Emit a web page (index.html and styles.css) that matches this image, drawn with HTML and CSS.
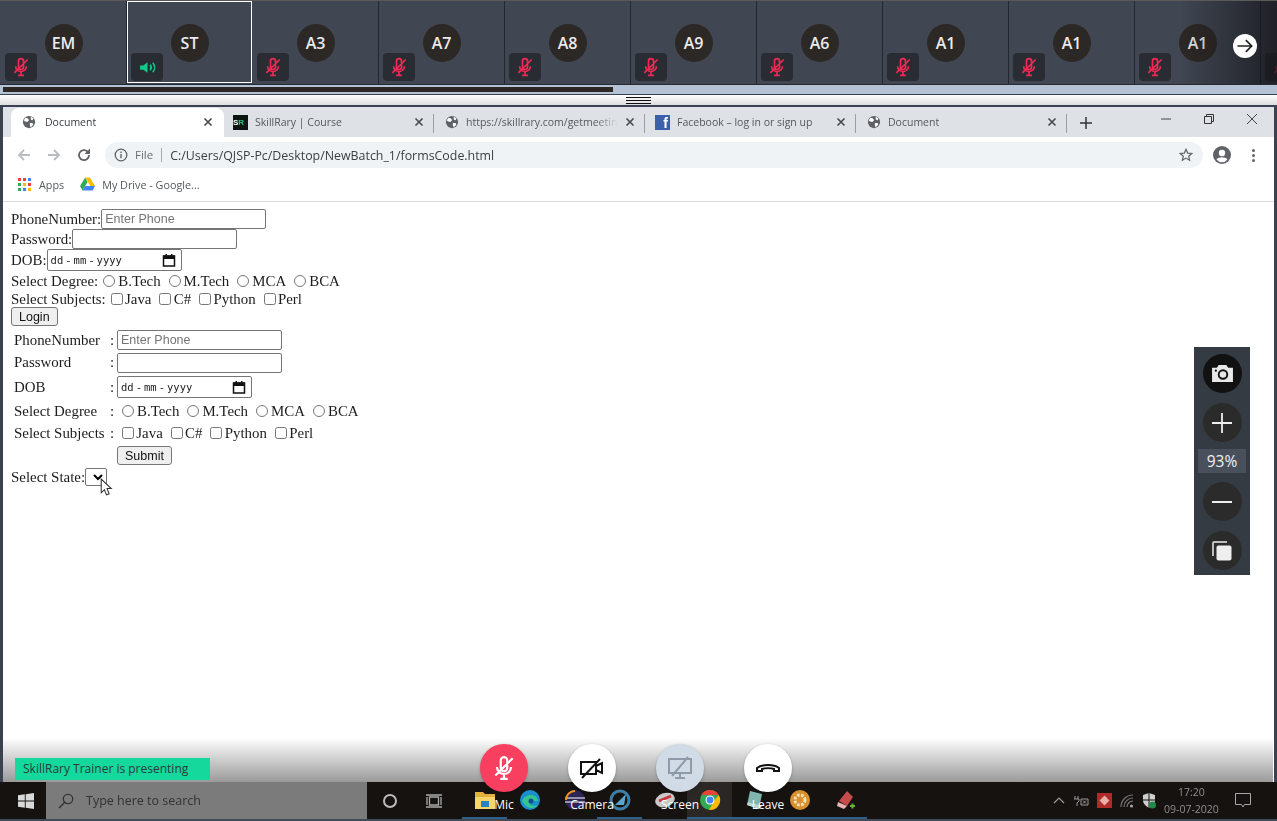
FILE: index.html
```html
<!DOCTYPE html>
<html>
<head>
    <title>Meeting</title>
    <link rel="stylesheet" href="styles.css">
</head>
<body>
    <svg class="defs" width="0" height="0">
        <symbol id="mic-off" viewBox="0 0 24 24">
            <path d="M9 5a3 3 0 0 1 6 0v7a3 3 0 0 1-6 0z M5.5 11a6.5 6.5 0 0 0 13 0 M12 18v4 M8.5 22h7 M4 19 20 3" fill="none" stroke="currentColor" stroke-width="2"/>
        </symbol>
        <symbol id="globe" viewBox="0 0 16 16">
            <circle cx="8" cy="8" r="7" fill="#5f6368"/>
            <path d="M4 3l3 1 1 2-2 2-3-1-1-1z M9 9l3 0 1 2-3 3-1-2z M10 2l3 2-1 2-2-1z" fill="#fff"/>
        </symbol>
        <symbol id="close-x" viewBox="0 0 10 10">
            <path d="M1.5 1.5l7 7M8.5 1.5l-7 7" stroke="#45484c" stroke-width="1.6" fill="none"/>
        </symbol>
        <symbol id="calendar" viewBox="0 0 14 14">
            <path d="M1.5 3h11v10h-11z" fill="none" stroke="#111" stroke-width="1.5"/>
            <path d="M1 2.5h12V6H1z M3.5 1h1.5v2H3.5z M9 1h1.5v2H9z" fill="#111"/>
        </symbol>
    </svg>

    <div class="strip">
        <div class="tile"><span class="avatar">EM</span><span class="badge"><svg class="mic"><use href="#mic-off"/></svg></span></div>
        <div class="tile tile-active">
            <span class="avatar">ST</span>
            <span class="badge">
                <svg class="speaker" viewBox="0 0 16 16"><path d="M1 6h3l4-3v10l-4-3H1z" fill="#12c98a"/><path d="M10.500 5.500a4 4 0 0 1 0 5M13 3.500a7 7 0 0 1 0 9" fill="none" stroke="#12c98a" stroke-width="1.500"/></svg>
            </span>
        </div>
        <div class="tile"><span class="avatar">A3</span><span class="badge"><svg class="mic"><use href="#mic-off"/></svg></span></div>
        <div class="tile"><span class="avatar">A7</span><span class="badge"><svg class="mic"><use href="#mic-off"/></svg></span></div>
        <div class="tile"><span class="avatar">A8</span><span class="badge"><svg class="mic"><use href="#mic-off"/></svg></span></div>
        <div class="tile"><span class="avatar">A9</span><span class="badge"><svg class="mic"><use href="#mic-off"/></svg></span></div>
        <div class="tile"><span class="avatar">A6</span><span class="badge"><svg class="mic"><use href="#mic-off"/></svg></span></div>
        <div class="tile"><span class="avatar">A1</span><span class="badge"><svg class="mic"><use href="#mic-off"/></svg></span></div>
        <div class="tile"><span class="avatar">A1</span><span class="badge"><svg class="mic"><use href="#mic-off"/></svg></span></div>
        <div class="tile"><span class="avatar">A1</span><span class="badge"><svg class="mic"><use href="#mic-off"/></svg></span></div>
        <div class="tile"><span class="badge"><svg class="mic"><use href="#mic-off"/></svg></span></div>
        <div class="strip-shade"></div>
        <div class="strip-next">
            <svg viewBox="0 0 24 24" width="20" height="20"><path d="M3 12h17M13 5l7 7-7 7" fill="none" stroke="#222" stroke-width="2"/></svg>
        </div>
    </div>
    <div class="scrubber"><div class="scrubber-thumb"></div></div>
    <div class="splitter"><div class="splitter-grip"></div></div>

    <div class="browser">
        <div class="tabbar">
            <div class="tab tab-active">
                <svg class="tab-icon"><use href="#globe"/></svg>
                <span class="tab-title">Document</span>
                <svg class="tab-close"><use href="#close-x"/></svg>
            </div>
            <div class="tab">
                <span class="sr-icon">S<b>R</b></span>
                <span class="tab-title">SkillRary | Course</span>
                <svg class="tab-close"><use href="#close-x"/></svg>
            </div>
            <div class="tab tab-sep">
                <svg class="tab-icon"><use href="#globe"/></svg>
                <span class="tab-title tab-fade">https://skillrary.com/getmeetin</span>
                <svg class="tab-close"><use href="#close-x"/></svg>
            </div>
            <div class="tab tab-sep">
                <span class="fb-icon">f</span>
                <span class="tab-title">Facebook – log in or sign up</span>
                <svg class="tab-close"><use href="#close-x"/></svg>
            </div>
            <div class="tab tab-sep">
                <svg class="tab-icon"><use href="#globe"/></svg>
                <span class="tab-title">Document</span>
                <svg class="tab-close"><use href="#close-x"/></svg>
            </div>
            <div class="tab-plus tab-sep">
                <svg viewBox="0 0 12 12" width="12" height="12"><path d="M6 0v12M0 6h12" stroke="#333" stroke-width="1.500"/></svg>
            </div>
            <div class="win-controls">
                <svg viewBox="0 0 10 10" width="10" height="10"><path d="M0 5h10" stroke="#444"/></svg>
                <svg viewBox="0 0 10 10" width="10" height="10"><path d="M.5 2.500h7v7h-7z M2.500 2.500v-2h7v7h-2" fill="none" stroke="#333"/></svg>
                <svg viewBox="0 0 10 10" width="10" height="10"><path d="M0 0l10 10M10 0L0 10" stroke="#444"/></svg>
            </div>
        </div>

        <div class="toolbar">
            <svg class="nav-icon" viewBox="0 0 16 16"><path d="M14 8H3M8 3L3 8l5 5" fill="none" stroke="#b9bcc0" stroke-width="1.800"/></svg>
            <svg class="nav-icon" viewBox="0 0 16 16"><path d="M2 8h11M8 3l5 5-5 5" fill="none" stroke="#b9bcc0" stroke-width="1.800"/></svg>
            <svg class="nav-icon" viewBox="0 0 16 16"><path d="M13 8a5 5 0 1 1-1.500-3.500L13 6" fill="none" stroke="#5f6368" stroke-width="1.800"/><path d="M14 1.500V7H8.500z" fill="#5f6368"/></svg>
            <div class="omnibox">
                <svg class="info-icon" viewBox="0 0 14 14"><circle cx="7" cy="7" r="5.800" fill="none" stroke="#5f6368" stroke-width="1.300"/><path d="M7 6v4.300M7 3.600v1.400" stroke="#5f6368" stroke-width="1.400"/></svg>
                <span class="omni-file">File</span>
                <span class="omni-url">C:/Users/QJSP-Pc/Desktop/NewBatch_1/formsCode.html</span>
                <svg class="star-icon" viewBox="0 0 14 14"><path d="M7 1.300l1.700 3.800 4.100.4-3.100 2.700.9 4L7 10.100l-3.600 2.100.9-4L1.200 5.500l4.100-.4z" fill="none" stroke="#5f6368" stroke-width="1.200"/></svg>
            </div>
            <svg class="account-icon" viewBox="0 0 18 18"><circle cx="9" cy="9" r="9" fill="#5f6368"/><circle cx="9" cy="7" r="3.200" fill="#fff"/><path d="M3.500 13.500c2-3 9-3 11 0a7 7 0 0 1-11 0z" fill="#fff"/></svg>
            <div class="menu-dots"><i></i><i></i><i></i></div>
        </div>

        <div class="bookmarks">
            <svg class="apps-icon" viewBox="0 0 13 13">
                <path d="M0 0h3v3H0z" fill="#ea4335"/><path d="M5 0h3v3H5z" fill="#ea4335"/><path d="M10 0h3v3h-3z" fill="#4285f4"/>
                <path d="M0 5h3v3H0z" fill="#34a853"/><path d="M5 5h3v3H5z" fill="#fbbc05"/><path d="M10 5h3v3h-3z" fill="#ea4335"/>
                <path d="M0 10h3v3H0z" fill="#34a853"/><path d="M5 10h3v3H5z" fill="#4285f4"/><path d="M10 10h3v3h-3z" fill="#fbbc05"/>
            </svg>
            <span class="bm-apps">Apps</span>
            <svg class="drive-icon" viewBox="0 0 16 14">
                <path d="M5.500 0h5L16 9h-5z" fill="#fbbc05"/><path d="M5.500 0L0 9l2.500 5L8 5z" fill="#34a853"/><path d="M5.500 9H16l-2.500 5h-11z" fill="#4285f4"/>
            </svg>
            <span>My Drive - Google...</span>
        </div>

        <div class="page">
            <div class="plain-form">
                <div class="line line-input">PhoneNumber:<input class="text-box" type="text" placeholder="Enter Phone"></div>
                <div class="line line-input">Password:<input class="text-box" type="password"></div>
                <div class="line line-date">DOB:<div class="date-box"><span>dd - mm - yyyy</span><svg class="cal"><use href="#calendar"/></svg></div></div>
                <div class="line line-degree">Select Degree:
                    <label class="opt opt-first"><input type="radio" name="d1">B.Tech</label>
                    <label class="opt"><input type="radio" name="d1">M.Tech</label>
                    <label class="opt"><input type="radio" name="d1">MCA</label>
                    <label class="opt"><input type="radio" name="d1">BCA</label>
                </div>
                <div class="line line-subjects">Select Subjects:
                    <label class="opt opt-first"><input type="checkbox">Java</label>
                    <label class="opt"><input type="checkbox">C#</label>
                    <label class="opt"><input type="checkbox">Python</label>
                    <label class="opt"><input type="checkbox">Perl</label>
                </div>
                <button class="btn">Login</button>
            </div>

            <div class="table-form">
                <div class="cell row-a">PhoneNumber</div><div class="cell row-a">:</div><div class="cell row-a"><input class="text-box" type="text" placeholder="Enter Phone"></div>
                <div class="cell row-b">Password</div><div class="cell row-b">:</div><div class="cell row-b"><input class="text-box" type="password"></div>
                <div class="cell row-c">DOB</div><div class="cell row-c">:</div><div class="cell row-c"><div class="date-box date-box-table"><span>dd - mm - yyyy</span><svg class="cal"><use href="#calendar"/></svg></div></div>
                <div class="cell row-d">Select Degree</div><div class="cell row-d">:</div>
                <div class="cell row-d opts">
                    <label class="opt"><input type="radio" name="d2">B.Tech</label>
                    <label class="opt"><input type="radio" name="d2">M.Tech</label>
                    <label class="opt"><input type="radio" name="d2">MCA</label>
                    <label class="opt"><input type="radio" name="d2">BCA</label>
                </div>
                <div class="cell row-e">Select Subjects</div><div class="cell row-e">:</div>
                <div class="cell row-e opts">
                    <label class="opt"><input type="checkbox">Java</label>
                    <label class="opt"><input type="checkbox">C#</label>
                    <label class="opt"><input type="checkbox">Python</label>
                    <label class="opt"><input type="checkbox">Perl</label>
                </div>
                <div class="cell row-f"></div><div class="cell row-f"></div><div class="cell row-f"><button class="btn">Submit</button></div>
            </div>

            <div class="line line-state">Select State:<select class="state-select"></select></div>
            <svg class="cursor" viewBox="0 0 12 18" width="13" height="19"><path d="M1 1v13l3-3 2 5 2.500-1-2-5h4z" fill="#fff" stroke="#333"/></svg>
        </div>
    </div>

    <div class="taskbar">
        <svg class="win-logo" viewBox="0 0 16 16"><path d="M0 2.300l6.800-1v6.300H0z M7.700 1.200L16 0v7.600H7.700z M0 8.400h6.800v6.300l-6.800-1z M7.700 8.400H16V16l-8.300-1.200z" fill="#d8d8d8"/></svg>
        <div class="task-search">
            <svg viewBox="0 0 16 16" width="16" height="16"><circle cx="10" cy="6" r="4.700" fill="none" stroke="#333" stroke-width="1.300"/><path d="M6.500 9.500L1 15" stroke="#333" stroke-width="1.500"/></svg>
            <span>Type here to search</span>
        </div>
        <div class="task-cortana"></div>
        <svg class="task-view" viewBox="0 0 16 14" width="16" height="14"><path d="M3.500 3h9v8h-9z M0 1h16M0 13h16M1 3v8M15 3v8" fill="none" stroke="#aaa" stroke-width="1.300"/></svg>
        <div class="task-apps">
            <div class="app">
                <svg viewBox="0 0 22 22" width="22" height="22"><path d="M1 3h8l2 2h10v15H1z" fill="#e3b23c"/><path d="M1 8h20v12H1z" fill="#f5d46a"/><path d="M7 12h8v6H7z" fill="#2a7fc4"/></svg>
            </div>
            <div class="app app-plain">
                <svg viewBox="0 0 22 22" width="22" height="22"><circle cx="11" cy="11" r="10" fill="#1a8fd0"/><path d="M3 12c3-8 15-8 16 0h-9c-1 3 3 6 9 4-4 5-12 4-16-4z" fill="#35c48d"/><circle cx="12" cy="12" r="2.500" fill="#0d4f8a"/></svg>
            </div>
            <div class="app app-plain">
                <svg viewBox="0 0 22 22" width="22" height="22"><circle cx="11" cy="11" r="10" fill="#2b2455"/><path d="M1 9h20M1 13h20" stroke="#fff" stroke-width="1.200"/><path d="M2 11a9 9 0 0 1 9-9" fill="none" stroke="#f7941e" stroke-width="2"/></svg>
            </div>
            <div class="app">
                <svg viewBox="0 0 22 22" width="22" height="22"><circle cx="11" cy="11" r="9" fill="none" stroke="#3d7ea6" stroke-width="3"/><path d="M6 16L17 5l-2 11z" fill="#5aa5cc"/></svg>
            </div>
            <div class="app app-plain">
                <svg viewBox="0 0 22 22" width="22" height="22"><ellipse cx="11" cy="11" rx="10" ry="7" fill="#c9c9c9" transform="rotate(-18 11 11)"/><path d="M5 12l12-5" stroke="#c8323a" stroke-width="2.500"/></svg>
            </div>
            <div class="app app-chrome">
                <svg viewBox="0 0 22 22" width="22" height="22"><circle cx="11" cy="11" r="10" fill="#34a853"/><path d="M2.300 6a10 10 0 0 1 17.400 0H11z" fill="#ea4335"/><path d="M19.700 6A10 10 0 0 1 10 21l5-9z" fill="#fbbc05"/><circle cx="11" cy="11" r="4.500" fill="#fff"/><circle cx="11" cy="11" r="3.400" fill="#4285f4"/></svg>
            </div>
            <div class="app">
                <svg viewBox="0 0 22 22" width="22" height="22"><path d="M6 2l12 3-3 15-12-4z" fill="#7fb5ad"/><path d="M3 16l12 4 3-3-14-4z" fill="#bcd6d2"/></svg>
            </div>
            <div class="app">
                <svg viewBox="0 0 22 22" width="22" height="22"><circle cx="11" cy="11" r="10" fill="#d8912c"/><circle cx="11" cy="11" r="5" fill="none" stroke="#f6e3bd" stroke-width="3" stroke-dasharray="2.500 1.500"/></svg>
            </div>
            <div class="app">
                <svg viewBox="0 0 22 22" width="22" height="22"><path d="M5 12L13 2l6 6-6 9z" fill="#c64b4b"/><path d="M4 13l9 4-3 3-7-3z" fill="#e8b4b4"/><path d="M16 17h5M18.500 14.500v5" stroke="#66b032" stroke-width="2"/></svg>
            </div>
        </div>
        <div class="tray">
            <svg viewBox="0 0 12 7" width="12" height="7"><path d="M1 6l5-5 5 5" fill="none" stroke="#9a9a9a" stroke-width="1.200"/></svg>
            <svg viewBox="0 0 16 12" width="16" height="12"><path d="M2 1v3M5 1v3M1 4h5v2L4 8v3M8 4h7v6H8zM10 5.500l3 3M13 5.500l-3 3" fill="none" stroke="#9a9a9a"/></svg>
            <span class="tray-red"><i></i></span>
            <svg viewBox="0 0 14 14" width="14" height="14"><path d="M1 13a12 12 0 0 1 12-12M4 13a9 9 0 0 1 9-9M7 13a6 6 0 0 1 6-6" fill="none" stroke="#777" stroke-width="1.200"/><circle cx="11.500" cy="12" r="1.500" fill="#aaa"/></svg>
            <svg viewBox="0 0 14 16" width="14" height="16"><path d="M7 0l6 2v5c0 4-3 6-6 8-3-2-6-4-6-8V2z" fill="#cfcfcf"/><path d="M7 0v15M1 7h12" stroke="#161210"/><circle cx="10.500" cy="12" r="3.500" fill="#1f8a4c"/></svg>
            <div class="clock"><span>17:20</span><span>09-07-2020</span></div>
            <svg class="notify" viewBox="0 0 16 15" width="16" height="15"><path d="M.5.500h15v11H9.500L8 14 6.500 11.500h-6z" fill="none" stroke="#a8a8a8"/></svg>
        </div>
    </div>

    <div class="zoom-panel">
        <div class="zoom-btn zoom-btn-shot">
            <svg viewBox="0 0 24 20" width="23" height="19"><path d="M1 4h5l2-3h8l2 3h5v15H1z" fill="#e8e8e8"/><circle cx="12.500" cy="11" r="4.500" fill="#e8e8e8" stroke="#111" stroke-width="2"/><circle cx="5" cy="7" r="1.200" fill="#111"/></svg>
        </div>
        <div class="zoom-btn"><svg viewBox="0 0 20 20" width="20" height="20"><path d="M10 0v20M0 10h20" stroke="#eee" stroke-width="1.800"/></svg></div>
        <div class="zoom-value">93%</div>
        <div class="zoom-btn"><svg viewBox="0 0 20 4" width="20" height="4"><path d="M0 2h20" stroke="#eee" stroke-width="2"/></svg></div>
        <div class="zoom-btn"><svg viewBox="0 0 20 20" width="20" height="20"><path d="M1 15V2a1 1 0 0 1 1-1h13" fill="none" stroke="#eee" stroke-width="1.500"/><rect x="4.500" y="4.500" width="15" height="15" rx="2" fill="#eee"/></svg></div>
    </div>

    <div class="call-bar">
        <div class="presenting">SkillRary Trainer is presenting</div>
        <div class="call-controls">
            <div class="call-item">
                <div class="call-btn call-btn-mic"><svg width="26" height="26"><use href="#mic-off"/></svg></div>
                <span>Mic</span>
            </div>
            <div class="call-item">
                <div class="call-btn">
                    <svg viewBox="0 0 26 26" width="26" height="26"><path d="M2 7h15v12H2z M17 11l6-3v10l-6-3" fill="none" stroke="#111" stroke-width="2"/><path d="M3 23L21 4" stroke="#111" stroke-width="2"/></svg>
                </div>
                <span>Camera</span>
            </div>
            <div class="call-item">
                <div class="call-btn call-btn-screen">
                    <svg viewBox="0 0 26 26" width="26" height="26"><path d="M2 4h22v14H2z M13 18v4 M8 23h10 M5 21L21 2" fill="none" stroke="#8e9aa8" stroke-width="2"/></svg>
                </div>
                <span>Screen</span>
            </div>
            <div class="call-item">
                <div class="call-btn">
                    <svg viewBox="0 0 26 12" width="26" height="12"><path d="M2 9V6c5-4 17-4 22 0v3h-5V7c-3-1-9-1-12 0v2z" fill="none" stroke="#111" stroke-width="2"/></svg>
                </div>
                <span>Leave</span>
            </div>
        </div>
    </div>
</body>
</html>
```

FILE: styles.css
```css
* {
  box-sizing: border-box;
}

body {
  margin: 0;
  width: 1277px;
  height: 821px;
  overflow: hidden;
  position: relative;
  display: flex;
  flex-direction: column;
  background-color: #fff;
  font-family: "Liberation Serif", serif;
}

.defs {
  position: absolute;
}

/* participant strip */
.strip {
  height: 85px;
  flex: none;
  position: relative;
  display: flex;
  overflow: hidden;
  padding-left: 1px;
  background-color: #404652;
  border-top: 1px solid #5a5a5a;
  border-bottom: 1px solid #252a33;
}

.tile {
  width: 126px;
  flex: none;
  position: relative;
  display: flex;
  justify-content: center;
  padding-top: 23px;
  border-right: 1px solid #23272e;
}

.tile-active {
  width: 125px;
  margin-right: 1px;
  border: 1px solid #fff;
  height: 82px;
  padding-top: 22px;
}

.avatar {
  width: 38px;
  height: 38px;
  border-radius: 50%;
  background-color: #2c2826;
  color: #ebebeb;
  font: 600 16px "Open Sans", sans-serif;
  display: flex;
  align-items: center;
  justify-content: center;
}

.badge {
  position: absolute;
  left: 4px;
  top: 52px;
  width: 32px;
  height: 28px;
  border-radius: 4px;
  background-color: #2a2c33;
  display: flex;
  align-items: center;
  justify-content: center;
  color: #ee2a55;
}

.tile-active .badge {
  left: 3px;
  top: 51px;
}

.mic {
  width: 20px;
  height: 20px;
}

.speaker {
  width: 17px;
  height: 17px;
}

.strip-shade {
  position: absolute;
  left: 1180px;
  top: 0;
  bottom: 0;
  width: 97px;
  background: linear-gradient(to right, rgba(20, 20, 24, 0), rgba(20, 20, 24, 0.75));
}

.strip-next {
  position: absolute;
  left: 1233px;
  top: 33px;
  width: 24px;
  height: 24px;
  border-radius: 50%;
  background-color: #fff;
  display: flex;
  align-items: center;
  justify-content: center;
}

.scrubber {
  height: 9px;
  flex: none;
  padding: 2px 0 0 3px;
  background-color: #b4c2d4;
}

.scrubber-thumb {
  width: 610px;
  height: 5px;
  background-color: #2c2826;
}

.splitter {
  height: 11px;
  flex: none;
  display: flex;
  justify-content: center;
  align-items: center;
  background: linear-gradient(#fff, #ddd);
  border-top: 1px solid #3a4150;
}

.splitter-grip {
  width: 25px;
  height: 7px;
  border-top: 1px solid #111;
  border-bottom: 1px solid #111;
  background: linear-gradient(#111, #111) center / 100% 1px no-repeat;
}

/* shared browser window */
.browser {
  flex: 1;
  min-height: 0;
  display: flex;
  flex-direction: column;
  border-top: 2px solid #3a4150;
  border-left: 3px solid #3a4150;
  border-right: 3px solid #3a4150;
  font-family: "Open Sans", sans-serif;
  filter: blur(0.3px);
}

.tabbar {
  height: 30px;
  flex: none;
  display: flex;
  align-items: flex-end;
  padding-left: 8px;
  background-color: #dee1e6;
}

.tab {
  width: 211px;
  height: 29px;
  flex: none;
  display: flex;
  align-items: center;
  padding: 0 9px 1px 11px;
  gap: 7px;
  font-size: 10.500px;
  color: #55585c;
  position: relative;
}

.tab-active {
  width: 213px;
  margin-right: -2px;
  padding: 0 11px 1px 11px;
  background-color: #fff;
  border-radius: 8px 8px 0 0;
  color: #3c4043;
  gap: 9px;
}

.tab-sep::before {
  content: "";
  position: absolute;
  left: 0;
  top: 6px;
  height: 19px;
  border-left: 1px solid #9a9da1;
}

.tab-icon {
  width: 14px;
  height: 14px;
  flex: none;
}

.tab-sep .tab-icon {
  margin-left: 1px;
}

.tab-title {
  flex: 1;
  white-space: nowrap;
  overflow: hidden;
}

.tab-fade {
  -webkit-mask-image: linear-gradient(to right, #000 85%, transparent);
}

.tab-close {
  width: 10px;
  height: 10px;
  flex: none;
}

.sr-icon {
  width: 15px;
  height: 15px;
  flex: none;
  background-color: #0b1613;
  color: #fff;
  font: bold 8px "Liberation Sans", sans-serif;
  line-height: 15px;
}

.sr-icon b {
  color: #33c07e;
}

.fb-icon {
  width: 15px;
  height: 15px;
  flex: none;
  background-color: #3b5fa8;
  color: #fff;
  font: bold 14px/17px "Liberation Sans", sans-serif;
  text-align: right;
  padding-right: 2px;
  overflow: hidden;
}

.tab-plus {
  width: 40px;
  height: 29px;
  position: relative;
  display: flex;
  align-items: center;
  justify-content: center;
}

.win-controls {
  flex: 1;
  height: 30px;
  display: flex;
  justify-content: flex-end;
  gap: 33px;
  padding: 7px 17px 0 0;
}

.toolbar {
  height: 33px;
  flex: none;
  display: flex;
  align-items: center;
  padding: 3px 0 0 13px;
  background-color: #fff;
}

.nav-icon {
  width: 16px;
  height: 16px;
  margin-right: 14px;
}

.omnibox {
  width: 1098px;
  height: 26px;
  margin-left: -1px;
  display: flex;
  align-items: center;
  padding: 0 10px 0 9px;
  border-radius: 13px;
  background-color: #f0f3f5;
  font-size: 12.400px;
  color: #3c4043;
}

.info-icon {
  width: 14px;
  height: 14px;
  margin-right: 7px;
}

.omni-file {
  color: #6a6d71;
  font-size: 11.500px;
  padding-right: 8px;
  margin-right: 8px;
  border-right: 1px solid #a6a9ad;
  line-height: 14px;
}

.omni-url {
  flex: 1;
}

.star-icon {
  width: 14px;
  height: 14px;
}

.account-icon {
  width: 18px;
  height: 18px;
  margin-left: 10px;
}

.menu-dots {
  display: flex;
  flex-direction: column;
  gap: 2px;
  margin-left: 21px;
}

.menu-dots i {
  width: 3px;
  height: 3px;
  border-radius: 50%;
  background-color: #5f6368;
}

.bookmarks {
  height: 32px;
  flex: none;
  display: flex;
  align-items: center;
  padding: 0 0 3px 15px;
  font-size: 10.800px;
  color: #55585c;
  background-color: #fff;
  border-bottom: 1px solid #dcdcdc;
}

.apps-icon {
  width: 13px;
  height: 13px;
  margin-right: 8px;
}

.bm-apps {
  margin-right: 16px;
}

.drive-icon {
  width: 15px;
  height: 14px;
  margin-right: 7px;
}

/* page content */
.page {
  flex: 1;
  position: relative;
  padding: 7px 0 0 8px;
  background-color: #fff;
  font-family: "Liberation Serif", serif;
  font-size: 14.900px;
  color: #1c1c1c;
}

.line {
  display: flex;
  align-items: center;
  white-space: nowrap;
}

.line-input {
  height: 20px;
}

.line-date {
  height: 22px;
}

.line-degree {
  height: 20px;
}

.line-subjects {
  height: 16px;
}

.line-state {
  height: 20px;
}

.text-box {
  width: 165px;
  height: 20px;
  padding: 0 3px;
  border: 1px solid #767676;
  border-radius: 2px;
  background-color: #fff;
  font: 12.500px "Liberation Sans", sans-serif;
}

.text-box::placeholder {
  color: #757575;
}

.date-box {
  width: 135px;
  height: 22px;
  display: flex;
  align-items: center;
  justify-content: space-between;
  padding: 0 5px 0 3px;
  border: 1px solid #767676;
  border-radius: 2px;
  background-color: #fff;
  font: 10.500px "DejaVu Sans Mono", monospace;
  color: #222;
}

.date-box span {
  word-spacing: -4.300px;
}

.cal {
  width: 14px;
  height: 14px;
  flex: none;
}

.opt {
  display: flex;
  align-items: center;
  margin-left: 8px;
}

.opt-first {
  margin-left: 5px;
}

.opt input {
  width: 12px;
  height: 12px;
  margin: 0 2.300px 0 0;
  flex: none;
}

.opt input[type="radio"] {
  margin-right: 3px;
}

.btn {
  height: 19px;
  padding: 0 7px;
  border: 1px solid #767676;
  border-radius: 3px;
  background-color: #efefef;
  font: 12.500px "Liberation Sans", sans-serif;
  color: #111;
}

.table-form {
  display: grid;
  grid-template-columns: 96px 7px 1fr;
  margin: 3px 0 0 3px;
}

.cell {
  display: flex;
  align-items: center;
  white-space: nowrap;
}

.row-a {
  height: 22px;
}

.row-b {
  height: 23px;
}

.row-c {
  height: 26px;
}

.row-d {
  height: 22px;
}

.row-e {
  height: 22px;
}

.row-f {
  height: 23px;
}

.opts {
  padding-left: 5px;
}

.opts .opt {
  margin: 0 8px 0 0;
}

.state-select {
  width: 22px;
  height: 18px;
  border: 1px solid #767676;
  border-radius: 2px;
  background-color: #fff;
}

.cursor {
  position: absolute;
  left: 97px;
  top: 276px;
}

/* windows taskbar */
.taskbar {
  height: 39px;
  flex: none;
  display: flex;
  align-items: center;
  background-color: #161210;
  border-bottom: 2px solid #404a58;
  filter: blur(0.3px);
}

.win-logo {
  width: 16px;
  height: 16px;
  margin: 0 12px 0 18px;
}

.task-search {
  width: 321px;
  height: 37px;
  display: flex;
  align-items: center;
  gap: 12px;
  padding-left: 12px;
  background-color: #7b7b7b;
  font: 12.500px "Open Sans", sans-serif;
  color: #333;
}

.task-cortana {
  width: 14px;
  height: 14px;
  margin-left: 16px;
  border: 2px solid #bbb;
  border-radius: 50%;
}

.task-view {
  margin-left: 29px;
}

.task-apps {
  display: flex;
  margin-left: 20px;
}

.app {
  width: 45px;
  height: 37px;
  display: flex;
  align-items: center;
  justify-content: center;
  border-bottom: 2px solid #2d5f8a;
}

.app-plain {
  border-bottom-color: transparent;
}

.app-chrome {
  background-color: #2a2725;
}

.tray {
  flex: 1;
  display: flex;
  align-items: center;
  gap: 8px;
  padding-left: 186px;
}

.tray-red {
  width: 15px;
  height: 15px;
  display: flex;
  align-items: center;
  justify-content: center;
  background-color: #b02a2a;
}

.tray-red i {
  width: 7px;
  height: 7px;
  transform: rotate(45deg);
  background-color: #e8b0a8;
}

.clock {
  display: flex;
  flex-direction: column;
  align-items: center;
  font: 10.500px/17px "Open Sans", sans-serif;
  color: #8f8f8f;
}

.notify {
  margin-left: 8px;
}

/* floating zoom panel */
.zoom-panel {
  position: absolute;
  left: 1194px;
  top: 347px;
  width: 56px;
  height: 228px;
  display: flex;
  flex-direction: column;
  align-items: center;
  padding-top: 7px;
  gap: 10px;
  background-color: #353b43;
}

.zoom-btn {
  width: 39px;
  height: 39px;
  border-radius: 50%;
  background-color: #2b2b2b;
  display: flex;
  align-items: center;
  justify-content: center;
}

.zoom-btn-shot {
  background-color: #111;
}

.zoom-value {
  width: 48px;
  height: 24px;
  margin: -3px 0 -1px;
  display: flex;
  align-items: center;
  justify-content: center;
  background-color: #49505b;
  color: #f2f2f2;
  font: 15.500px "Open Sans", sans-serif;
}

/* call controls over the bottom edge */
.call-bar {
  position: absolute;
  left: 0;
  top: 738px;
  width: 1270px;
  margin-left: 3px;
  height: 81px;
  pointer-events: none;
}

.call-bar::before {
  content: "";
  position: absolute;
  left: 0;
  top: 0;
  width: 100%;
  height: 44px;
  background: linear-gradient(rgba(120, 120, 120, 0), rgba(120, 120, 120, 0.75));
}

.presenting {
  position: absolute;
  left: 12px;
  top: 20px;
  width: 195px;
  height: 22px;
  line-height: 22px;
  padding-left: 8px;
  background-color: #14d89c;
  color: #2b3a3a;
  font: 12px/22px "Open Sans", sans-serif;
}

.call-controls {
  position: absolute;
  left: 477px;
  top: 6px;
  display: flex;
  gap: 40px;
}

.call-item {
  width: 48px;
  display: flex;
  flex-direction: column;
  align-items: center;
  gap: 4px;
  color: #fff;
  font: 12px/18px "Open Sans", sans-serif;
}

.call-btn {
  width: 48px;
  height: 48px;
  border-radius: 50%;
  background-color: #fff;
  display: flex;
  align-items: center;
  justify-content: center;
  box-shadow: 0 1px 3px rgba(0, 0, 0, 0.25);
}

.call-btn-mic {
  background-color: #f83f60;
  color: #fff;
}

.call-btn-screen {
  background-color: #d0dbe6;
}
```
